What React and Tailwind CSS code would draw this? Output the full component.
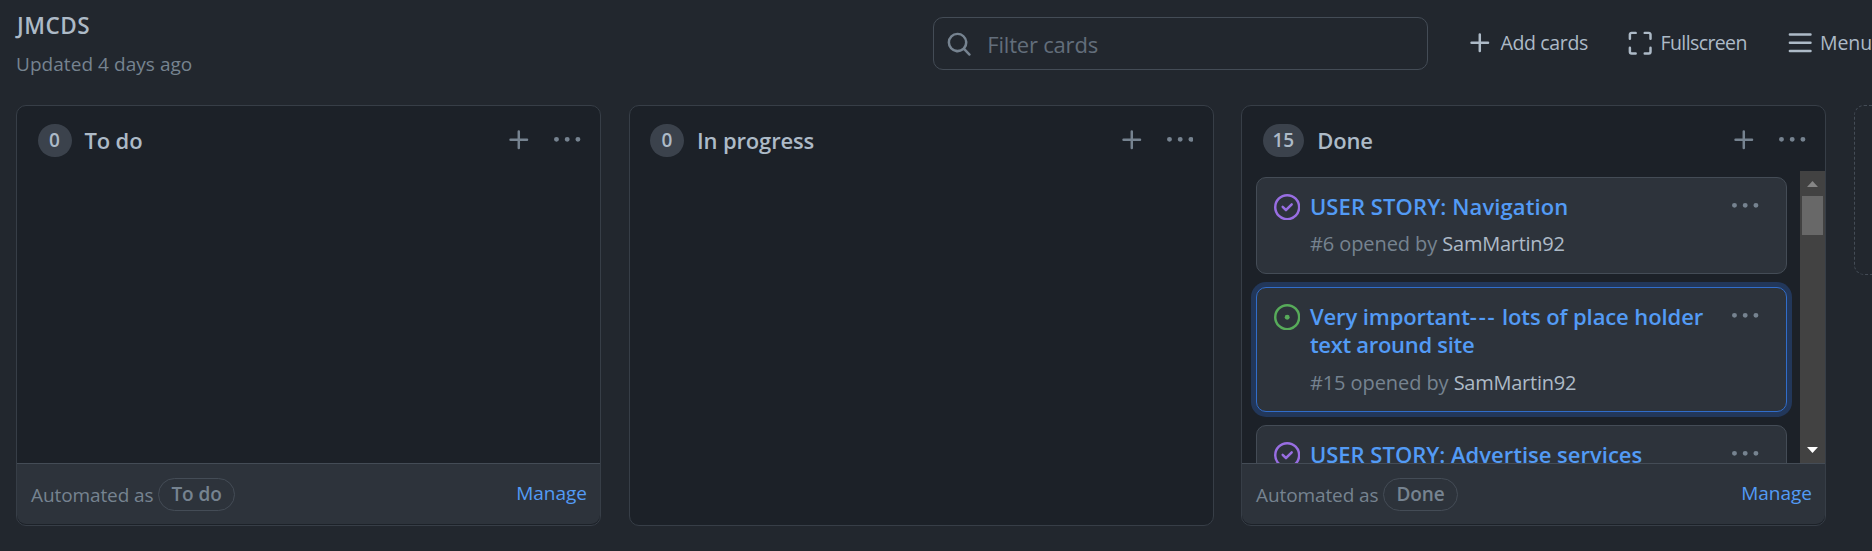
function Icon({ className, children }) {
  return (
    <svg viewBox="0 0 16 16" fill="currentColor" aria-hidden="true" className={`h-[26.4px] w-[26.4px] shrink-0 ${className || ''}`}>
      {children}
    </svg>
  );
}

const Plus = ({ className }) => (
  <Icon className={className}>
    <path d="M7.75 2a.75.75 0 0 1 .75.75V7h4.25a.75.75 0 0 1 0 1.5H8.5v4.25a.75.75 0 0 1-1.5 0V8.5H2.75a.75.75 0 0 1 0-1.5H7V2.75A.75.75 0 0 1 7.75 2Z" />
  </Icon>
);

const Kebab = ({ className }) => (
  <Icon className={className}>
    <path d="M8 9a1.5 1.5 0 1 0 0-3 1.5 1.5 0 0 0 0 3ZM1.5 9a1.5 1.5 0 1 0 0-3 1.5 1.5 0 0 0 0 3Zm13 0a1.5 1.5 0 1 0 0-3 1.5 1.5 0 0 0 0 3Z" />
  </Icon>
);

const Search = ({ className }) => (
  <Icon className={className}>
    <path d="M10.68 11.74a6 6 0 0 1-7.922-8.982 6 6 0 0 1 8.982 7.922l3.04 3.04a.749.749 0 0 1-.326 1.275.749.749 0 0 1-.734-.215ZM11.5 7a4.499 4.499 0 1 0-8.997 0A4.499 4.499 0 0 0 11.5 7Z" />
  </Icon>
);

const ScreenFull = ({ className }) => (
  <Icon className={className}>
    <path d="M2.75 2.5a.25.25 0 0 0-.25.25v2.5a.75.75 0 0 1-1.5 0v-2.5C1 1.784 1.784 1 2.75 1h2.5a.75.75 0 0 1 0 1.5ZM10 1.75a.75.75 0 0 1 .75-.75h2.5c.966 0 1.75.784 1.75 1.75v2.5a.75.75 0 0 1-1.5 0v-2.5a.25.25 0 0 0-.25-.25h-2.5a.75.75 0 0 1-.75-.75ZM1.75 10a.75.75 0 0 1 .75.75v2.5c0 .138.112.25.25.25h2.5a.75.75 0 0 1 0 1.5h-2.5A1.75 1.75 0 0 1 1 13.25v-2.5a.75.75 0 0 1 .75-.75Zm12.5 0a.75.75 0 0 1 .75.75v2.5A1.75 1.75 0 0 1 13.25 15h-2.5a.75.75 0 0 1 0-1.5h2.5a.25.25 0 0 0 .25-.25v-2.5a.75.75 0 0 1 .75-.75Z" />
  </Icon>
);

const Bars = ({ className }) => (
  <Icon className={className}>
    <path d="M1 2.75A.75.75 0 0 1 1.75 2h12.5a.75.75 0 0 1 0 1.5H1.75A.75.75 0 0 1 1 2.75Zm0 5A.75.75 0 0 1 1.75 7h12.5a.75.75 0 0 1 0 1.5H1.75A.75.75 0 0 1 1 7.75ZM1.75 12h12.5a.75.75 0 0 1 0 1.5H1.75a.75.75 0 0 1 0-1.5Z" />
  </Icon>
);

const IssueClosed = () => (
  <Icon className="text-[#986ee2]">
    <path d="M11.28 6.78a.75.75 0 0 0-1.06-1.06L7.25 8.69 5.78 7.22a.75.75 0 0 0-1.06 1.06l2 2a.75.75 0 0 0 1.06 0l3.5-3.5Z" />
    <path d="M16 8A8 8 0 1 1 0 8a8 8 0 0 1 16 0Zm-1.5 0a6.5 6.5 0 1 0-13 0 6.5 6.5 0 0 0 13 0Z" />
  </Icon>
);

const IssueOpen = () => (
  <Icon className="text-[#57ab5a]">
    <path d="M8 9.5a1.5 1.5 0 1 0 0-3 1.5 1.5 0 0 0 0 3Z" />
    <path d="M8 0a8 8 0 1 1 0 16A8 8 0 0 1 8 0ZM1.5 8a6.5 6.5 0 1 0 13 0 6.5 6.5 0 0 0-13 0Z" />
  </Icon>
);

function Column({ count, title, automated, children }) {
  return (
    <section className="flex h-[421px] w-[585px] shrink-0 flex-col rounded-[10px] border border-[#373e47] bg-[#1c2128]">
      <header className="flex h-[65px] shrink-0 items-center pt-[4px] pr-[19.5px] pl-[20.5px]">
        <span className="flex h-[33px] min-w-[34px] items-center justify-center rounded-full bg-[#3b424c] px-[10px] pb-px text-[19px] font-semibold">
          {count}
        </span>
        <h3 className="ml-[13px] text-[22px] font-semibold tracking-[-0.15px]">{title}</h3>
        <Plus className="ml-auto text-[#768390]" />
        <Kebab className="ml-[21.5px] text-[#768390]" />
      </header>
      <div className="flex min-h-0 flex-1">{children}</div>
      {automated && (
        <footer className="mb-px flex h-[61.5px] shrink-0 items-center rounded-b-[9px] border-t border-[#444c56] bg-[#2d333b] pr-[13px] pl-[14px] text-[19px] text-[#768390]">
          <span className="mt-[2px] tracking-[-0.1px]">Automated as</span>
          <span className="mt-px ml-[5px] flex h-[33px] items-center rounded-full border border-[#444c56] px-[12px] pb-px font-semibold tracking-[-0.1px]">
            {automated}
          </span>
          <a className="-mt-[2px] ml-auto text-[#539bf5]">Manage</a>
        </footer>
      )}
    </section>
  );
}

function Card({ open, title, number, selected, height, metaGap }) {
  return (
    <article
      className={`flex shrink-0 rounded-[10px] border bg-[#2d333b] pt-[16px] pl-[17px] ${height} ${
        selected ? 'border-[#316dca] shadow-[0_0_0_5px_#22375a]' : 'border-[#444c56]'
      }`}
    >
      {open ? <IssueOpen /> : <IssueClosed />}
      <div className="-mt-[2.5px] ml-[9.5px] w-[400px]">
        <h5 className="text-[22px] leading-[28px] font-semibold text-[#539bf5]">{title}</h5>
        {number && (
          <p className={`text-[20px] leading-[30px] tracking-[-0.08px] text-[#768390] ${metaGap}`}>
            {number} opened by <span className="tracking-[-0.25px] text-[#adbac7]">SamMartin92</span>
          </p>
        )}
      </div>
      <Kebab className="-mt-[1px] ml-[22.5px] text-[#768390]" />
    </article>
  );
}

function Scrollbar() {
  return (
    <div className="flex w-[25px] shrink-0 flex-col items-center bg-[#424242]">
      <svg viewBox="0 0 25 25" className="h-[25px] w-[25px] shrink-0">
        <path d="M7 16 12.5 10 18 16Z" fill="#868686" />
      </svg>
      <div className="h-[39px] w-[21px] bg-[#686868]" />
      <svg viewBox="0 0 25 25" className="mt-auto h-[25px] w-[25px] shrink-0">
        <path d="M7 9 12.5 15 18 9Z" fill="#ffffff" />
      </svg>
    </div>
  );
}

export default function App() {
  return (
    <main className="flex h-[551px] w-[1872px] flex-col overflow-hidden bg-[#22272e] pl-[16px] font-['Open_Sans',sans-serif] text-[#adbac7]">
      <div className="flex h-[105px] shrink-0 items-start">
        <div className="w-[917.5px] pt-[11px]">
          <h1 className="pl-px text-[22.5px] leading-[30px] font-semibold tracking-[0.5px]">JMCDS</h1>
          <p className="mt-[8px] text-[19px] leading-[30px] tracking-[0.05px] text-[#768390]">Updated 4 days ago</p>
        </div>
        <label className="mt-[17px] flex h-[53px] w-[495px] items-center rounded-[10px] border border-[#444c56] pl-[12px] text-[22px] tracking-[-0.2px] text-[#636e7b]">
          <Search className="mt-[2px] text-[#768390]" />
          <span className="mt-[2px] ml-[15px]">Filter cards</span>
        </label>
        <nav className="mt-[28px] flex h-[30px] items-center text-[19.5px] tracking-[-0.35px] whitespace-nowrap">
          <span className="flex w-[160px] items-center pl-[39.5px]">
            <Plus className="mr-[7px]" />Add cards
          </span>
          <span className="flex w-[160px] items-center pl-[39.5px] tracking-[-0.6px]">
            <ScreenFull className="mr-[7px]" />Fullscreen
          </span>
          <span className="flex items-center pl-[39px] tracking-[-0.1px]">
            <Bars className="mr-[7px]" />Menu
          </span>
        </nav>
      </div>

      <div className="flex items-start gap-[27.5px]">
        <Column count={0} title="To do" automated="To do" />
        <Column count={0} title="In progress" />
        <Column count={15} title="Done" automated="Done">
          <div className="flex min-w-0 flex-1 flex-col gap-[13px] overflow-hidden pt-[6px] pr-[13px] pl-[14px]">
            <Card title={<span className="tracking-[0.1px]">USER STORY: Navigation</span>} number="#6" height="h-[97px]" metaGap="mt-[9px]" />
            <Card
              open
              selected
              number="#15"
              height="h-[125px]"
              metaGap="mt-[10px]"
              title={
                <>
                  <span className="tracking-[-0.1px]">Very important</span>
                  <span className="tracking-[1.8px]">---</span>
                  <span className="tracking-[-0.1px]"> lots of place holder</span>
                  <span className="tracking-[-0.3px]"> text around site</span>
                </>
              }
            />
            <Card title="USER STORY: Advertise services" height="h-[97px]" />
          </div>
          <Scrollbar />
        </Column>
        <div className="h-[170px] w-[586px] shrink-0 rounded-[10px] border border-dashed border-[#444c56]" />
      </div>
    </main>
  );
}
